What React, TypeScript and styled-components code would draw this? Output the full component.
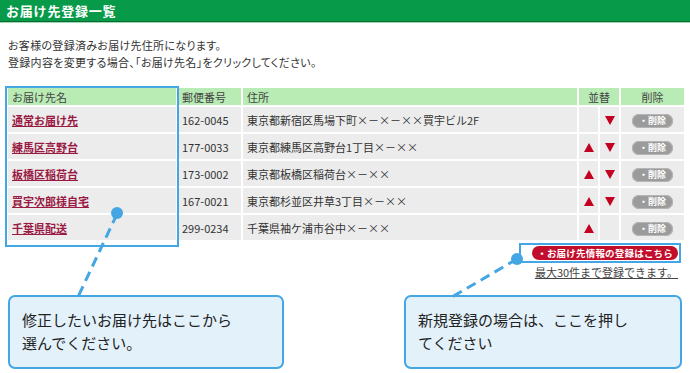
import styled, { createGlobalStyle } from 'styled-components'

const GlobalStyle = createGlobalStyle`
    html, body {
        margin: 0;
        padding: 0;
        background: #fff;
    }
    body {
        font-family: "Noto Sans CJK JP", "Noto Sans", sans-serif;
        color: #333;
    }
`

const Page = styled.div`
    position: relative;
    width: 690px;
    height: 373px;
    overflow: hidden;
    background: #fff;
`

const TitleBar = styled.h2`
    margin: 0;
    height: 21px;
    padding-left: 6px;
    background: #079a49;
    border-bottom: 1px solid #0a6a31;
    box-shadow: 0 1px 0 #9fd9b2;
    color: #fff;
    font-size: 13px;
    font-weight: 700;
    line-height: 21px;
    letter-spacing: 0.8px;
`

const Intro = styled.div`
    padding: 15px 8px 0;
    font-size: 11px;
    line-height: 17px;
    color: #333;
    letter-spacing: 0.3px;
    font-feature-settings: "palt";
`

const TableArea = styled.div`
    position: relative;
    margin-top: 15px;
    padding-left: 6px;
`

const Table = styled.table`
    width: 680px;
    table-layout: fixed;
    border-collapse: separate;
    border-spacing: 2px;
    font-size: 11px;
`

const Th = styled.th<{ $align?: string }>`
    height: 17px;
    padding: 0 0 0 ${(p) => (p.$align === 'center' ? 0 : 4)}px;
    background: #b9ebb4;
    color: #444;
    font-weight: 400;
    text-align: ${(p) => p.$align || 'left'};
`

const Td = styled.td<{ $align?: string }>`
    height: 25px;
    padding: 0 0 0 ${(p) => (p.$align === 'center' ? 0 : 4)}px;
    background: #ececec;
    text-align: ${(p) => p.$align || 'left'};
    vertical-align: middle;
    white-space: nowrap;
`

const NameLink = styled.a`
    color: #9a1a44;
    font-weight: 700;
    text-decoration: underline;
    cursor: pointer;
`

const Arrow = styled.span<{ $dir: 'up' | 'down' }>`
    display: inline-block;
    width: 0;
    height: 0;
    border-left: 5px solid transparent;
    border-right: 5px solid transparent;
    ${(p) => (p.$dir === 'up' ? 'border-bottom: 9px solid #c3001f;' : 'border-top: 9px solid #c3001f;')}
`

const DeleteButton = styled.span`
    display: inline-block;
    width: 41px;
    height: 14px;
    border-radius: 8px;
    background: #9b9b9b;
    box-shadow: inset 0 0 0 1px #b5b5b5;
    color: #fff;
    font-size: 9px;
    font-weight: 700;
    line-height: 14px;
    text-align: center;
`

const NameFrame = styled.div`
    position: absolute;
    left: 5px;
    top: 0;
    width: 170px;
    height: 157px;
    border: 2px solid #45a6e4;
    pointer-events: none;
`

const RegisterRow = styled.div`
    display: flex;
    flex-direction: column;
    align-items: flex-end;
    padding-right: 9px;
    margin-top: 1px;
`

const RegisterFrame = styled.div`
    padding: 1px 1px 1px 11px;
    border: 2px solid #45a6e4;
`

const RegisterButton = styled.a`
    display: block;
    height: 14px;
    padding: 0 5px;
    border-radius: 8px;
    background: #c20d2b;
    color: #fff;
    font-size: 9.5px;
    font-weight: 700;
    line-height: 14px;
    letter-spacing: 0.2px;
`

const Note = styled.div`
    margin-top: 2px;
    padding-right: 3px;
    font-size: 11px;
    line-height: 15px;
    color: #444;
    text-decoration: underline;
`

const CalloutRow = styled.div`
    display: flex;
    justify-content: space-between;
    padding: 0 8px;
    margin-top: 15px;
`

const Callout = styled.div<{ $width: number }>`
    box-sizing: border-box;
    width: ${(p) => p.$width}px;
    height: 74px;
    padding: 11px 12px 0;
    border: 2px solid #45a6e4;
    border-radius: 7px;
    background: #e3f1fa;
    color: #222;
    font-size: 15px;
    line-height: 23px;
`

const Leaders = styled.svg`
    position: absolute;
    left: 0;
    top: 0;
    pointer-events: none;
`

const rows = [
    { name: '通常お届け先', zip: '162-0045', addr: '東京都新宿区馬場下町×－×－××買宇ビル2F', up: false, down: true },
    { name: '練馬区高野台', zip: '177-0033', addr: '東京都練馬区高野台1丁目×－××', up: true, down: true },
    { name: '板橋区稲荷台', zip: '173-0002', addr: '東京都板橋区稲荷台×－××', up: true, down: true },
    { name: '買宇次郎様自宅', zip: '167-0021', addr: '東京都杉並区井草3丁目×－××', up: true, down: true },
    { name: '千葉県配送', zip: '299-0234', addr: '千葉県袖ケ浦市谷中×－××', up: true, down: false },
]

const App = () => {
    return (
        <Page>
            <GlobalStyle />
            <TitleBar>お届け先登録一覧</TitleBar>
            <Intro>
                お客様の登録済みお届け先住所になります。
                <br />
                登録内容を変更する場合、「お届け先名」をクリックしてください。
            </Intro>
            <TableArea>
                <Table>
                    <colgroup>
                        <col style={{ width: 168 }} />
                        <col style={{ width: 63 }} />
                        <col style={{ width: 334 }} />
                        <col style={{ width: 19 }} />
                        <col style={{ width: 19 }} />
                        <col style={{ width: 63 }} />
                    </colgroup>
                    <thead>
                        <tr>
                            <Th>お届け先名</Th>
                            <Th>郵便番号</Th>
                            <Th>住所</Th>
                            <Th colSpan={2} $align="center">並替</Th>
                            <Th $align="center">削除</Th>
                        </tr>
                    </thead>
                    <tbody>
                        {rows.map((r) => (
                            <tr key={r.zip}>
                                <Td><NameLink>{r.name}</NameLink></Td>
                                <Td>{r.zip}</Td>
                                <Td>{r.addr}</Td>
                                <Td $align="center">{r.up && <Arrow $dir="up" />}</Td>
                                <Td $align="center">{r.down && <Arrow $dir="down" />}</Td>
                                <Td $align="center"><DeleteButton>・削除</DeleteButton></Td>
                            </tr>
                        ))}
                    </tbody>
                </Table>
                <NameFrame />
            </TableArea>
            <RegisterRow>
                <RegisterFrame>
                    <RegisterButton>・お届け先情報の登録はこちら</RegisterButton>
                </RegisterFrame>
                <Note>最大30件まで登録できます。</Note>
            </RegisterRow>
            <CalloutRow>
                <Callout $width={276}>
                    修正したいお届け先はここから
                    <br />
                    選んでください。
                </Callout>
                <Callout $width={278}>
                    新規登録の場合は、ここを押し
                    <br />
                    てください
                </Callout>
            </CalloutRow>
            <Leaders width="690" height="373">
                <line x1="117" y1="214" x2="78" y2="297" stroke="#45a6e4" strokeWidth="3" strokeDasharray="10 6" />
                <circle cx="117" cy="213" r="6" fill="#45a6e4" />
                <line x1="517" y1="259" x2="452" y2="297" stroke="#45a6e4" strokeWidth="3" strokeDasharray="10 6" />
                <circle cx="517" cy="259" r="6" fill="#45a6e4" />
            </Leaders>
        </Page>
    )
}

export default App
